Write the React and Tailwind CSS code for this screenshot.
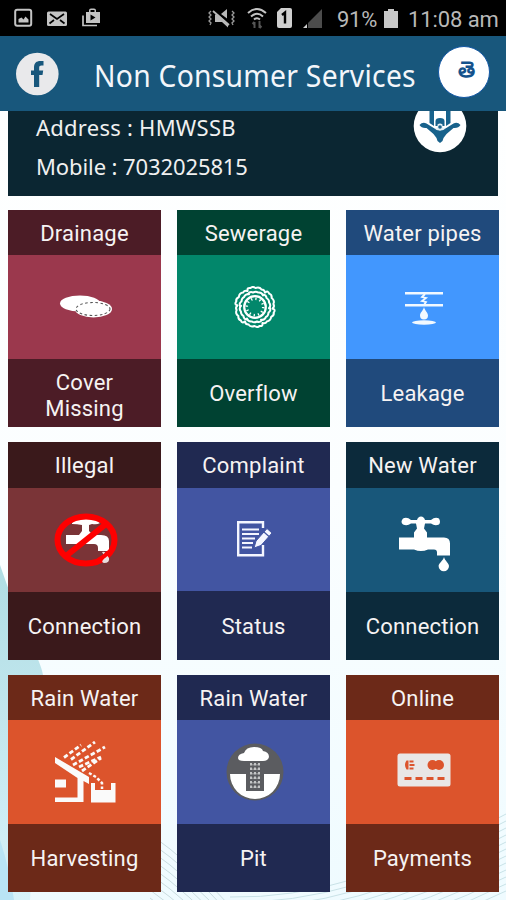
const StatusIconsLeft = () => (
    <svg width="90" height="22" viewBox="0 0 90 22" fill="#c4c4c4">
        <rect x="2.200" y="2.700" width="16" height="16" rx="2" fill="none" stroke="#c4c4c4" strokeWidth="2"/>
        <path d="M5.500 15.500V12l3-1.500 2 2 2-3 3 3v3z"/>
        <rect x="34" y="4.500" width="20" height="14.500" rx="1.500"/>
        <path d="M37 7l7 5 7-5M36.500 16.500l4.500-3.500M51.500 16.500L47 13" fill="none" stroke="#000" strokeWidth="1.700"/>
        <path d="M73 5h3V3.500a2 2 0 0 1 2-2h3a2 2 0 0 1 2 2V5h4v11H73zM77.500 5h4V3h-4zM77.500 7.500v6l5-3z" fillRule="evenodd"/>
        <path d="M70 8.500V18.500h14" fill="none" stroke="#c4c4c4" strokeWidth="1.700"/>
    </svg>
);

const MuteIcon = () => (
    <svg width="28" height="20" viewBox="0 0 28 20" fill="#b9b9b9">
        <path d="M19 1v9.500L13 6z"/>
        <path d="M7 6.500h3l10 9v4l-6-5.500H7z"/>
        <path d="M5 3l16 14" stroke="#b9b9b9" strokeWidth="1.800"/>
        <path d="M3 3L1 5l2 2-2 2 2 2-2 2 2 2-1 2M24 3l2 2-2 2 2 2-2 2 2 2-2 2 1 2" stroke="#999" fill="none" strokeWidth="1.300"/>
    </svg>
);

const WifiIcon = () => (
    <svg width="20" height="22" viewBox="0 0 20 22" fill="none" stroke="#c4c4c4" strokeWidth="2">
        <path d="M1 6Q10-2 19 6M4 9.500Q10 4 16 9.500M7 12.500Q10 10 13 12.500"/>
        <path d="M7.500 21v-6M5.500 17l2-2M12.500 14v7M14.500 19l-2 2" stroke="#555"/>
    </svg>
);

const SimIcon = () => (
    <svg width="15" height="20" viewBox="0 0 15 20">
        <path d="M4 0h9a2 2 0 0 1 2 2v16a2 2 0 0 1-2 2H2a2 2 0 0 1-2-2V4z" fill="#cfcfcf"/>
        <path d="M5 7l3-2.500V15.500" fill="none" stroke="#000" strokeWidth="2.400"/>
    </svg>
);

const SignalIcon = () => (
    <svg width="19" height="19" viewBox="0 0 19 19">
        <path d="M5 19V14L19 0v19z" fill="#4c4c4c"/>
        <path d="M0 19l4-4v4z" fill="#d0d0d0"/>
    </svg>
);

const BatteryIcon = () => (
    <svg width="14" height="19" viewBox="0 0 14 19" fill="#c8c8c8">
        <path d="M4 0h6v2h4v17H0V2h4z"/>
    </svg>
);

const FacebookIcon = () => (
    <svg width="44" height="44" viewBox="0 0 44 44">
        <circle cx="22.300" cy="22" r="21.300" fill="#e9e9eb"/>
        <path d="M19 35V23h-3v-4.500h3v-3c0-4.500 2.600-6.500 6.300-6.500h3.200v4.600h-2c-1.700 0-2.300.8-2.300 2.200v2.700h4L27.500 23h-3.300v12z" fill="#18577c"/>
    </svg>
);

const BoardIcon = () => (
    <svg width="54" height="54" viewBox="0 0 54 54">
        <circle cx="27" cy="27" r="26.300" fill="#fff"/>
        <path d="M16.500 6H21v21l-4.500-3zM33 6h4.500v18L33 27z" fill="#18628c"/>
        <path d="M6.500 26q3-3.500 7-1.500l8 5 5.500 2 5.500-2 8-5q4-2 7 1.500-2 3.500-7 3l-7 6-3 4-1 3-2.500 2-2.500-2-1-3-3-4-7-6q-5 .5-7-3z" fill="#18628c"/>
        <path d="M22.500 22q0-3 4.500-3t4.500 3v5h-9z" fill="#18628c"/>
        <path d="M24.500 25.500q2.500-2 5 0v2.500l2 2.500q-4.500 2-9 0l2-2.500z" fill="#e6f1f6"/>
        <circle cx="27" cy="28" r="1.800" fill="#18628c"/>
    </svg>
);

const CoverIcon = () => (
    <svg width="54" height="24" viewBox="0 0 54 24">
        <ellipse cx="21" cy="8.500" rx="20" ry="8" fill="#fff"/>
        <ellipse cx="34.500" cy="14" rx="18.500" ry="8.500" fill="#fff"/>
        <ellipse cx="34" cy="14" rx="17" ry="6.500" fill="none" stroke="#555" strokeWidth="1.100" strokeDasharray="2.500 2.500"/>
    </svg>
);

const SewerIcon = () => (
    <svg width="46" height="42" viewBox="0 0 46 42" fill="none" stroke="#fff" strokeWidth="2" strokeLinecap="round">
        <circle cx="23" cy="21" r="10.800" strokeWidth="2.200"/>
        <circle cx="23" cy="21" r="8.200" strokeWidth="2.500" strokeDasharray="1.300 3" strokeLinecap="butt"/>
        {[0, 60, 120, 180, 240, 300].map((angle) => (
            <g key={angle} transform={`rotate(${angle} 23 21)`}>
                <path d="M15.500 4.500q-.5-3 3-2.500 2-2 5 0 4-1.500 6 1.500 3 0 3.500 3"/>
                <path d="M16 8q2-3 5-1.500 3-1.500 5 0 4-.5 5 3"/>
            </g>
        ))}
    </svg>
);

const LeakIcon = () => (
    <svg width="40" height="34" viewBox="0 0 40 34" fill="#f2f9ff">
        <path d="M1 1h38v2.600H1zM1 13h38v2.600H1z"/>
        <path d="M21 3l-3 3 4 1-4 3 4 1-2 3" fill="none" stroke="#f2f9ff" strokeWidth="1.800"/>
        <path d="M20 16c1 4 4 5.500 4 8.500a4 4 0 0 1-8 0C16 21.500 19 20 20 16z"/>
        <ellipse cx="20" cy="31.500" rx="12" ry="2.200"/>
    </svg>
);

const IllegalIcon = () => (
    <svg width="64" height="54" viewBox="0 0 64 54">
        <path d="M18 10q4-4.500 14-4.500t14 4.500q-3 2-8 1l-3 1v6l4 4h8q8 0 8 6v10H44v-3q0-4-4-4H12v-9h13l3-4v-6q-5-1-10-1z" fill="#fff"/>
        <ellipse cx="32" cy="27" rx="28.500" ry="23.500" fill="none" stroke="#fe0000" strokeWidth="6"/>
        <path d="M12 43L52 11" stroke="#fe0000" strokeWidth="6"/>
        <path d="M48 39q3-1 4 2l3 4q1 5-5 5-3-1-1-3 3-2-1-8z" fill="#e8dede"/>
        <path d="M44 47q6-3 11-8" stroke="#fe0000" strokeWidth="4" fill="none"/>
    </svg>
);

const ComplaintIcon = () => (
    <svg width="36" height="36" viewBox="0 0 36 36" fill="none" stroke="#f4f6ff">
        <path d="M26 7V1.200H1.200v33H26V24" strokeWidth="2.400"/>
        <path d="M5 8.500h17M5 13h17M5 17.500h13M5 22h11M5 26.500h10" strokeWidth="2"/>
        <path d="M17 27l2-7L30 7.500l5 4.500L24 24.500z" fill="#f4f6ff" stroke="#4255a2" strokeWidth="1"/>
        <path d="M27 11l5 4.500" stroke="#4255a2" strokeWidth="1.200"/>
    </svg>
);

const TapIcon = () => (
    <svg width="52" height="56" viewBox="0 0 52 56" fill="#fff">
        <path d="M5 2.500q4-2 8 1.500h6q1-3.500 4-3.500t4 3.500h6q4-3.500 8-1.500 2 3.500 0 6-4 2-8-1h-6l-1 5 3 4v5h17q6 0 6 6v12H39v-3q0-3-3-3h-6q-7 3-14 0H1V21.500h15v-5l3-4-1-5h-5q-4 3-8 1-3-2.500 0-6z"/>
        <path d="M46 41c1 4 5 6 5 9a5.200 5.200 0 0 1-10.400 0C40.600 47 45 45 46 41z"/>
    </svg>
);

const HarvestIcon = () => (
    <svg width="62" height="62" viewBox="0 0 62 62" fill="#fafafa">
        <path d="M0 16l34 20v7L28.500 40v21H0v-4.500h22.500V37L0 22z"/>
        <path d="M0 38.500h11v8H0z"/>
        <path d="M36 42h4v7h16v-7h4.500v19.500H36z"/>
        <path d="M9 16.500L26 4M16 18.500L40 1M18 24L50 6M24 26L46 16M27 30L46 17" stroke="#fafafa" strokeWidth="2.800" strokeDasharray="4.500 2.300"/>
        <path d="M34 32l7 4 6 6v6" fill="none" stroke="#fafafa" strokeWidth="2.500" strokeDasharray="3 2"/>
    </svg>
);

const PitIcon = () => (
    <svg width="58" height="58" viewBox="0 0 58 58">
        <circle cx="29" cy="29" r="28.500" fill="#5b5c60"/>
        <path d="M4 31h16v17h18V31h16A25 25 0 0 1 4 31z" fill="#fff"/>
        <path d="M18 18q-6 0-6-3 0-4 6-5 2-6 10-6 8 0 9 4 6 1 6 6-1 4-6 4z" fill="#fff"/>
        <path d="M25 20v26M29 20v26M33 20v26" stroke="#e8e8e8" strokeWidth="1.500" strokeDasharray="2.500 2"/>
        <path d="M27 21v24M31 21v24" stroke="#bbb" strokeWidth="1" strokeDasharray="1.500 3"/>
    </svg>
);

const CardIcon = () => (
    <svg width="54" height="34" viewBox="0 0 54 34" fill="#dc542c">
        <rect x=".5" y=".5" width="53" height="33" rx="2.500" fill="#e9e7e6"/>
        <path d="M9.500 7.500h2v9h-2q-3-4.500 0-9zM12.500 7.500h4v2h-4zM12.500 11h5v2h-5zM12.500 14.500h4v2h-4z"/>
        <circle cx="35.500" cy="12" r="5"/>
        <circle cx="42" cy="12" r="5"/>
        <path d="M7.500 24h7v3h-7zM18.500 24h7v3h-7zM29.500 24h7v3h-7zM40.500 24h7v3h-7z"/>
    </svg>
);

const Backdrop = () => (
    <svg className="absolute inset-0" width="506" height="900" viewBox="0 0 506 900" fill="none">
        <defs>
            <linearGradient id="fade" x1="0" y1="0" x2="0" y2="1">
                <stop offset="0" stopColor="#ffffff"/>
                <stop offset=".55" stopColor="#fbfeff"/>
                <stop offset="1" stopColor="#effbff"/>
            </linearGradient>
            <linearGradient id="wave" x1="0" y1="0" x2="0" y2="1">
                <stop offset="0" stopColor="#b0dde4"/>
                <stop offset="1" stopColor="#d7f2f9"/>
            </linearGradient>
        </defs>
        <rect width="506" height="900" fill="url(#fade)"/>
        <path d="M0 565Q12 600 27 637q14 26 16 38L30 900H0z" fill="url(#wave)"/>
        <path d="M0 840q10 30 14 60H0z" fill="#b9e4f5"/>
        {[0, 1, 2, 3, 4, 5, 6, 7, 8].map((i) => (
            <path key={i} d={`M150 ${834 + i * 8}Q190 ${862 + i * 8} 230 ${906 + i * 8}`} stroke="#c9dcdf"/>
        ))}
        {[0, 1, 2, 3, 4, 5, 6, 7, 8, 9, 10, 11].map((i) => (
            <path key={i} d={`M230 ${897 + i * 5}Q350 ${900 + i * 6} 506 ${814 + i * 7}`} stroke="#c9e2e7"/>
        ))}
    </svg>
);

const tiles = [
    { top: 'Drainage', bottom: 'Cover Missing', icon: CoverIcon, dark: 'bg-[#4c1c26]', light: 'bg-[#9b384d]', foot: 'h-[68.500px] pt-[7px]' },
    { top: 'Sewerage', bottom: 'Overflow', icon: SewerIcon, dark: 'bg-[#004232]', light: 'bg-[#02876b]' },
    { top: 'Water pipes', bottom: 'Leakage', icon: LeakIcon, dark: 'bg-[#204a7c]', light: 'bg-[#4297fe]', pad: 'pt-[3px]' },
    { top: 'Illegal', bottom: 'Connection', icon: IllegalIcon, dark: 'bg-[#3a191b]', light: 'bg-[#7a3437]', foot: 'h-[67.500px] pt-[3px]' },
    { top: 'Complaint', bottom: 'Status', icon: ComplaintIcon, dark: 'bg-[#202951]', light: 'bg-[#4255a2]', foot: 'h-[69px] pt-[3px]' },
    { top: 'New Water', bottom: 'Connection', icon: TapIcon, dark: 'bg-[#0c2a3b]', light: 'bg-[#18577a]', pad: 'pt-2', foot: 'h-[67.500px] pt-[3px]' },
    { top: 'Rain Water', bottom: 'Harvesting', icon: HarvestIcon, dark: 'bg-[#6c2918]', light: 'bg-[#dc542c]' },
    { top: 'Rain Water', bottom: 'Pit', icon: PitIcon, dark: 'bg-[#202951]', light: 'bg-[#4255a2]' },
    { top: 'Online', bottom: 'Payments', icon: CardIcon, dark: 'bg-[#6c2918]', light: 'bg-[#dc542c]', pad: 'pb-[3px]' },
];

const Tile = ({ top, bottom, icon: Icon, dark, light, pad = '', foot = 'h-[68.500px] pt-[3px]' }) => (
    <div className="flex h-[217.500px] flex-col text-center text-[22px] leading-[26px] tracking-[0.2px] text-[#f6f3f3]">
        <div className={`flex h-[45.500px] items-center justify-center pt-[3px] whitespace-nowrap ${dark}`}>{top}</div>
        <div className={`flex flex-1 items-center justify-center pl-[2px] ${pad} ${light}`}><Icon /></div>
        <div className={`flex items-center justify-center px-7 ${foot} ${dark}`}>{bottom}</div>
    </div>
);

export default function App() {
    return (
        <div className="relative h-[900px] w-[506px] overflow-hidden font-['Roboto',sans-serif]">
            <Backdrop />
            <div className="relative flex flex-col">
                <div className="flex h-9 items-center bg-black pl-[13px] text-[22px] text-[#b8b8b8]">
                    <StatusIconsLeft />
                    <div className="ml-[105px]"><MuteIcon /></div>
                    <div className="ml-[11px]"><WifiIcon /></div>
                    <div className="ml-[10px]"><SimIcon /></div>
                    <div className="ml-[11px]"><SignalIcon /></div>
                    <span className="ml-[15px] w-[44px] pt-0.5 whitespace-nowrap tracking-[-0.3px]">91%</span>
                    <div className="ml-[3px]"><BatteryIcon /></div>
                    <span className="ml-[10px] pt-0.5 whitespace-nowrap tracking-[-0.1px]">11:08 am</span>
                </div>

                <div className="flex h-[75px] items-center bg-[#18577c] pl-[15px]">
                    <FacebookIcon />
                    <h1 className="mt-[3px] ml-[35px] w-[344px] origin-left scale-x-[0.942] whitespace-nowrap font-['Noto_Sans',sans-serif] text-[30px] tracking-[0.3px] text-[#f3f6fa]">Non Consumer Services</h1>
                    <div className="mb-1 flex size-[52px] shrink-0 items-center justify-center rounded-full border border-[#1257a5] bg-white pb-1 pl-1 text-[22px] font-bold text-[#14528c]">తె</div>
                </div>

                <div className="mx-2 flex h-[84.500px] justify-between overflow-hidden bg-[#0b2632] pr-[31px] pl-7 font-['Noto_Sans',sans-serif] text-[22px] leading-[39px] text-[#f0f0f0]">
                    <div className="-mt-[3px] whitespace-nowrap">
                        <p className="tracking-[0.25px]">Address : HMWSSB</p>
                        <p className="tracking-[-0.1px]">Mobile : 7032025815</p>
                    </div>
                    <div className="-mt-3"><BoardIcon /></div>
                </div>

                <div className="mx-2 mt-[14px] grid w-[491px] grid-cols-3 gap-x-4 gap-y-[15px]">
                    {tiles.map((tile, i) => (
                        <Tile key={i} {...tile} />
                    ))}
                </div>
            </div>
        </div>
    );
}
